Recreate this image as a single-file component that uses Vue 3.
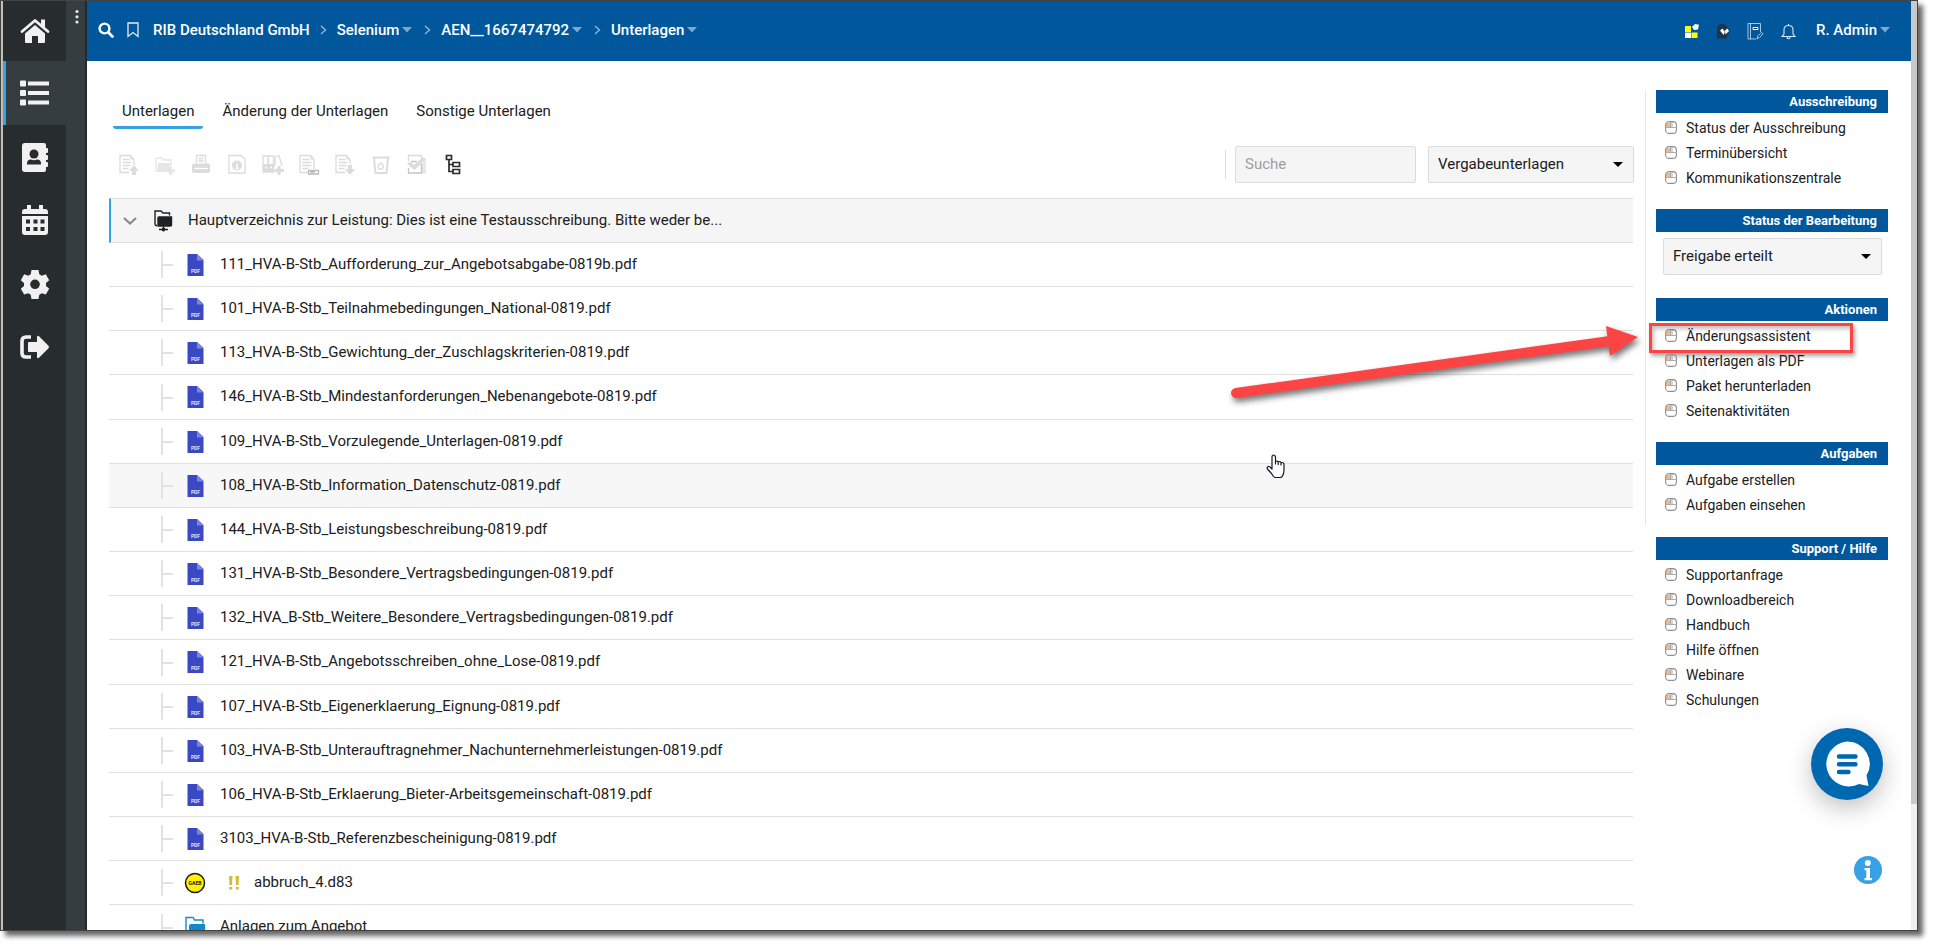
<script setup>
import { ref } from 'vue'

const search = ref('')
const filter = ref('Vergabeunterlagen')
const status = ref('Freigabe erteilt')
const activeTab = ref('Unterlagen')

const tabs = ['Unterlagen', 'Änderung der Unterlagen', 'Sonstige Unterlagen']
const crumbs = [
  { label: 'RIB Deutschland GmbH', menu: false },
  { label: 'Selenium', menu: true },
  { label: 'AEN__1667474792', menu: true },
  { label: 'Unterlagen', menu: true },
]
const files = [
  { type: 'pdf', name: '111_HVA-B-Stb_Aufforderung_zur_Angebotsabgabe-0819b.pdf' },
  { type: 'pdf', name: '101_HVA-B-Stb_Teilnahmebedingungen_National-0819.pdf' },
  { type: 'pdf', name: '113_HVA-B-Stb_Gewichtung_der_Zuschlagskriterien-0819.pdf' },
  { type: 'pdf', name: '146_HVA-B-Stb_Mindestanforderungen_Nebenangebote-0819.pdf' },
  { type: 'pdf', name: '109_HVA-B-Stb_Vorzulegende_Unterlagen-0819.pdf' },
  { type: 'pdf', name: '108_HVA-B-Stb_Information_Datenschutz-0819.pdf', hover: true },
  { type: 'pdf', name: '144_HVA-B-Stb_Leistungsbeschreibung-0819.pdf' },
  { type: 'pdf', name: '131_HVA-B-Stb_Besondere_Vertragsbedingungen-0819.pdf' },
  { type: 'pdf', name: '132_HVA_B-Stb_Weitere_Besondere_Vertragsbedingungen-0819.pdf' },
  { type: 'pdf', name: '121_HVA-B-Stb_Angebotsschreiben_ohne_Lose-0819.pdf' },
  { type: 'pdf', name: '107_HVA-B-Stb_Eigenerklaerung_Eignung-0819.pdf' },
  { type: 'pdf', name: '103_HVA-B-Stb_Unterauftragnehmer_Nachunternehmerleistungen-0819.pdf' },
  { type: 'pdf', name: '106_HVA-B-Stb_Erklaerung_Bieter-Arbeitsgemeinschaft-0819.pdf' },
  { type: 'pdf', name: '3103_HVA-B-Stb_Referenzbescheinigung-0819.pdf' },
  { type: 'gaeb', name: 'abbruch_4.d83', warning: true },
  { type: 'folder', name: 'Anlagen zum Angebot' },
]
const panels = [
  { title: 'Ausschreibung', items: ['Status der Ausschreibung', 'Terminübersicht', 'Kommunikationszentrale'] },
  { title: 'Status der Bearbeitung', select: true, items: [] },
  { title: 'Aktionen', items: ['Änderungsassistent', 'Unterlagen als PDF', 'Paket herunterladen', 'Seitenaktivitäten'] },
  { title: 'Aufgaben', items: ['Aufgabe erstellen', 'Aufgaben einsehen'] },
  { title: 'Support / Hilfe', items: ['Supportanfrage', 'Downloadbereich', 'Handbuch', 'Hilfe öffnen', 'Webinare', 'Schulungen'] },
]
const panelGroups = [panels.slice(0, 4), panels.slice(4)]
const highlighted = 'Änderungsassistent'
</script>

<template>
  <div class="window">
    <nav class="rail" aria-label="Hauptnavigation">
      <a href="#" aria-label="Startseite">
        <svg width="30" height="26" viewBox="0 0 30 26">
          <path d="M2 13.500 15 2.500 28 13.500" fill="none" stroke="#f1f1f1" stroke-width="2.800" stroke-linecap="round" stroke-linejoin="round" />
          <path d="M21 1.500h4V10l-4-3.500z M15 7l10 8.500V24q0 1-1 1h-6v-7h-6v7H6q-1 0-1-1v-8.500z" fill="#f1f1f1" />
        </svg>
      </a>
      <a href="#" class="active" aria-label="Liste">
        <svg width="30" height="26" viewBox="0 0 30 26" fill="#f1f1f1">
          <path d="M0 1.500q0-1 1-1h4q1 0 1 1v4q0 1-1 1H1q-1 0-1-1z M0 11q0-1 1-1h4q1 0 1 1v4q0 1-1 1H1q-1 0-1-1z M0 20.500q0-1 1-1h4q1 0 1 1v4q0 1-1 1H1q-1 0-1-1z M8 1.500h21v4H8z M8 11h21v4H8z M8 20.500h21v4H8z" />
        </svg>
      </a>
      <a href="#" aria-label="Kontakte">
        <svg width="28" height="30" viewBox="0 0 28 30">
          <path d="M4 1h19q2 0 2 2v3h1q1 0 1 1v3q0 1-1 1h-1v2h1q1 0 1 1v3q0 1-1 1h-1v2h1q1 0 1 1v3q0 1-1 1h-1v3q0 2-2 2H4q-3 0-3-3V4q0-3 3-3z" fill="#f1f1f1" />
          <circle cx="13" cy="12" r="4.500" fill="#272c2f" />
          <path d="M6 22.500v-1q0-4 4-4 3 1.500 6 0 4 0 4 4v1z" fill="#272c2f" />
        </svg>
      </a>
      <a href="#" aria-label="Kalender">
        <svg width="28" height="30" viewBox="0 0 28 30">
          <path d="M6 0h4v4h8V0h4v4h2q3 0 3 3v2H1V7q0-3 3-3h2z M1 11h26v16q0 3-3 3H4q-3 0-3-3z" fill="#f1f1f1" />
          <path d="M5 14.500h4v4H5z M12.500 14.500h4v4h-4z M19.500 14.500h4v4h-4z M5 22h4v4H5z M12.500 22h4v4h-4z M19.500 22h4v4h-4z" fill="#272c2f" />
        </svg>
      </a>
      <a href="#" aria-label="Einstellungen">
        <svg width="30" height="30" viewBox="0 0 30 30">
          <path d="M11.500 1h7l.8 4.200 2.500 1.500 4-1.400 3.400 5.900-3.200 2.800v2.900l3.200 2.800-3.400 5.900-4-1.400-2.500 1.500-.8 4.200h-7l-.8-4.200-2.500-1.500-4 1.400-3.400-5.900L4 16.900V14L.8 11.200l3.400-5.900 4 1.400 2.500-1.500z" fill="#f1f1f1" />
          <circle cx="15" cy="15.300" r="4.800" fill="#272c2f" />
        </svg>
      </a>
      <a href="#" aria-label="Abmelden">
        <svg width="30" height="24" viewBox="0 0 30 24">
          <path d="M11 2H6Q2 2 2 6v12q0 4 4 4h5" fill="none" stroke="#f1f1f1" stroke-width="3.600" />
          <path d="M8 8q0-1 1-1h8V2q0-2 2-.8l9.500 9.600q1 1.200 0 2.400L19 22.800q-2 1.200-2-.8v-5H9q-1 0-1-1z" fill="#f1f1f1" />
        </svg>
      </a>
    </nav>
    <div class="drawer">
      <button type="button" aria-label="Menü">
        <svg width="6" height="16" viewBox="0 0 6 16" fill="#e8e8e8"><circle cx="3" cy="2.500" r="1.600" /><circle cx="3" cy="7.800" r="1.600" /><circle cx="3" cy="13" r="1.600" /></svg>
      </button>
    </div>

    <div class="page">
      <header class="topbar">
        <button type="button" class="tool" aria-label="Suchen">
          <svg width="16" height="16" viewBox="0 0 16 16" fill="none" stroke="#fff" stroke-linecap="round"><circle cx="6.500" cy="6.500" r="4.900" stroke-width="2.400" /><path d="M10.500 10.500 14.400 14.400" stroke-width="2.800" /></svg>
        </button>
        <button type="button" class="tool bookmark" aria-label="Lesezeichen">
          <svg width="14" height="16" viewBox="0 0 14 16" fill="none" stroke="#e5edf4" stroke-width="1.300"><path d="M2 1h10v13.500L7 10.500 2 14.500z" /></svg>
        </button>
        <nav class="crumbs" aria-label="Brotkrumen">
          <template v-for="(c, i) in crumbs" :key="c.label">
            <svg v-if="i" class="sep" width="7" height="10" viewBox="0 0 7 10" fill="none" stroke="#8fb4d3" stroke-width="1.400"><path d="M1 1 5.500 5 1 9" /></svg>
            <a href="#">{{ c.label }}<svg v-if="c.menu" width="10" height="6" viewBox="0 0 10 6" fill="#7fa9cc"><path d="M0 0h10L5 5.500z" /></svg></a>
          </template>
        </nav>
        <div class="user">
          <button type="button" class="tool" aria-label="Apps">
            <svg width="14" height="16" viewBox="0 0 14 16"><path d="M0 3h6v6H0z M6.500 9.500h6v5.500h-6z" fill="#ff0" /><path d="M0 9.500h6V15H0z" fill="#fff" /><path d="m10 1 4 .8-1 4.700-4 .5-2-3z" fill="#fff" /></svg>
          </button>
          <button type="button" class="tool" aria-label="Aufgaben">
            <svg width="14" height="16" viewBox="0 0 14 16"><path d="M1 2.500h2.500V1h5v1.500H11V15.500H1z" fill="#1d3549" /><path d="m7 5.500 3-1.500 3.500 2.500-1 5-3 2-4-3z" fill="#1d3549" /><path d="M4 7.500 6.500 5.500 9 9l-1.500 3z M9 7.500 11.500 5.500 13 8 9.500 11.500z" fill="#fff" /></svg>
          </button>
          <button type="button" class="tool" aria-label="Notizen">
            <svg width="17" height="17" viewBox="0 0 17 17" fill="none" stroke="#a9c6df"><path d="M13.500 9V.500H1V16h8 M3.500.500V16" /><path d="M6 4.500h5v2H6z" stroke="#fff" fill="#172f46" /><path d="m10 16 .8-3L14.500 9.300l1.600 1.600-3.700 3.800z" /></svg>
          </button>
          <button type="button" class="tool" aria-label="Mitteilungen">
            <svg width="15" height="17" viewBox="0 0 15 17" fill="none" stroke="#dbe7f1" stroke-width="1.100"><path d="M7.500 1v1.500 M1 13.500 3 11V7q0-4.500 4.500-4.500T12 7v4l2 2.500z M6 14q0 1.800 1.500 1.800T9 14" /></svg>
          </button>
          <button type="button" class="account">R. Admin<svg width="10" height="6" viewBox="0 0 10 6" fill="#7fa9cc"><path d="M0 0h10L5 5.500z" /></svg></button>
        </div>
      </header>

      <div class="body">
        <main>
          <div class="tabs" role="tablist">
            <button v-for="t in tabs" :key="t" type="button" role="tab" :aria-selected="t === activeTab" :class="{ active: t === activeTab }" @click="activeTab = t">{{ t }}</button>
          </div>

          <div class="toolbar">
            <button type="button" disabled aria-label="Hochladen">
              <svg width="22" height="22" viewBox="0 0 22 22"><path d="M11 18.500H2V1.500h10.500l3.500 4V11 M4.500 5.500h7 M4.500 8.500h9 M4.500 11.500h8 M4.500 14.500h6" /><path d="m12.500 5.500v-4l4 4z M16 11l5 6h-3v4h-4v-4h-3z" class="fill" /></svg>
            </button>
            <button type="button" disabled class="faint" aria-label="Ordner anlegen">
              <svg width="22" height="22" viewBox="0 0 22 22"><path d="M2 18V4h6l1.500 2H17v3" /><path d="M4 9h13.500v2.500H15V16h-3v2H3z" class="fill" /><path d="M16.500 12.500V21 M12 17h9" class="plus" /></svg>
            </button>
            <button type="button" disabled aria-label="Drucken">
              <svg width="22" height="22" viewBox="0 0 22 22"><path d="M6.500 9V1.500h9V9 M8.500 4.500h5 M8.500 7h5" /><path d="M2 11.500q0-2 2-2h14q2 0 2 2V17q0 2-2 2H4q-2 0-2-2z" class="fill" /><path d="M4.500 14.500h13" stroke="#fff" /></svg>
            </button>
            <button type="button" disabled aria-label="Information">
              <svg width="22" height="22" viewBox="0 0 22 22"><path d="M3 1.500h12l4 4V19H3z" /><circle cx="11" cy="11.500" r="5" class="fill" /><path d="M11 10v5 M9.500 14.500h3 M10.500 8.500h1" stroke="#fff" stroke-width="1.600" /></svg>
            </button>
            <button type="button" disabled aria-label="Ordner hinzufügen">
              <svg width="22" height="22" viewBox="0 0 22 22"><path d="M1 2h5v16H1z M6.500 2h5v16h-5z M13 3l4-1.500L20 12 M13 3v9" /><path d="M1 10h5v8H1z M6.500 10h5v8h-5z" class="fill" /><path d="M3 13.500h1.500 M8.500 13.500H10" stroke="#fff" stroke-width="2" /><path d="M17 12v9 M12.500 16.500H22" class="plus" /></svg>
            </button>
            <button type="button" disabled aria-label="Umbenennen">
              <svg width="22" height="22" viewBox="0 0 22 22"><path d="M10 18.500H2V1.500h10.500l3.500 4V15 M4.500 5.500h7 M4.500 8.500h9 M4.500 11.500h9 M4.500 14.500h6" /><path d="m12.500 5.500v-4l4 4z" class="fill" /><path d="M10.500 16.500h10v3.500h-10z M12 18h5" stroke="#bbb" /></svg>
            </button>
            <button type="button" disabled aria-label="Herunterladen">
              <svg width="22" height="22" viewBox="0 0 22 22"><path d="M11 18.500H2V1.500h10.500l3.500 4V10 M4.500 5.500h7 M4.500 8.500h9 M4.500 11.500h8 M4.500 14.500h6" /><path d="m12.500 5.500v-4l4 4z M14 11h4v4h3l-5 6-5-6h3z" class="fill" /></svg>
            </button>
            <button type="button" disabled aria-label="Löschen">
              <svg width="22" height="22" viewBox="0 0 22 22"><path d="M2.500 3.500h17 M4 4l1.500 15h11L18 4" class="thick" /><path d="m8 13 1.500-3.500h2.500L13.500 13l-1.500 2H9z" /></svg>
            </button>
            <button type="button" disabled aria-label="Prüfen">
              <svg width="22" height="22" viewBox="0 0 22 22"><path d="M2.500 7V1.500h13V4 M17 9v9.500h2V7" /><path d="M2.500 14v5h13v-9 M5 7.500h6" class="mid" /><path d="m1 10 3-2.500 4 3.500L17 3l3 2.500L8.500 16z" class="fill" /></svg>
            </button>
            <button type="button" class="dark" aria-label="Baumansicht">
              <svg width="22" height="22" viewBox="0 0 22 22"><path d="M4.500 1.500h5v4h-5z M11 8.500h6.500v4H11z M11 15.500h6.500v4H11z M7 6v11.500h4 M7 10.500h4" /></svg>
            </button>
            <div class="filters">
              <input v-model="search" type="text" placeholder="Suche" aria-label="Suche" />
              <label class="select">
                <select v-model="filter" aria-label="Dokumentfilter"><option>Vergabeunterlagen</option></select>
                <svg width="10" height="5" viewBox="0 0 10 5"><path d="M0 0h10L5 5z" /></svg>
              </label>
            </div>
          </div>

          <ul class="tree">
            <li class="root">
              <button type="button" class="toggle" aria-label="Einklappen">
                <svg width="14" height="8" viewBox="0 0 14 8" fill="none" stroke="#8a8a8a" stroke-width="2.200"><path d="M1 1l6 5.500L13 1" /></svg>
              </button>
              <svg class="rootIcon" width="19" height="22" viewBox="0 0 19 22" fill="none" stroke="#1f2122" stroke-width="1.400"><path d="M3 15.500H2Q1 15 1 14V1h6l2 2h6.500v2.500" /><path d="M4 8q0-1 1-1h12.500v8q0 1-1 1H4z" fill="#1f2122" /><path d="M9.500 16v5 M5 19.500h9" /><circle cx="9.500" cy="19.500" r="1.200" fill="#1f2122" /></svg>
              <a href="#">Hauptverzeichnis zur Leistung: Dies ist eine Testausschreibung. Bitte weder be...</a>
            </li>
            <li v-for="f in files" :key="f.name" :class="{ hover: f.hover }">
              <span class="branch"></span>
              <span class="icon">
                <svg v-if="f.type === 'pdf'" width="17" height="24" viewBox="0 0 17 24"><path d="M.500 1h9.500l6.500 6v16H.500z" fill="#3a48c4" /><path d="M10 1l6.500 6.500H10z" fill="#7d86dc" /><text x="8.500" y="20" text-anchor="middle" class="mini" fill="#dfe2f8">PDF</text></svg>
                <svg v-else-if="f.type === 'gaeb'" width="22" height="22" viewBox="0 0 22 22"><circle cx="11" cy="11" r="9.500" fill="#fff100" stroke="#1c1c1c" stroke-width="1.500" /><text x="11" y="13" text-anchor="middle" class="mini" fill="#111">GAEB</text></svg>
                <svg v-else width="20" height="22" viewBox="0 0 20 22"><path d="M3 18H1V1.500h7L9.500 4H18v3.500" fill="none" stroke="#1488cc" stroke-width="1.400" /><path d="M4 10q0-2 2-2h14v10q0 2-2 2H4z" fill="#1488cc" /></svg>
              </span>
              <svg v-if="f.warning" class="warning" width="12" height="14" viewBox="0 0 12 14" fill="#d2bd35"><path d="M1 0h3.500L4 9H1.500z M7.500 0H11l-.5 9H8z M1.200 11h3v2.500h-3z M7.800 11h3v2.500h-3z" /></svg>
              <a href="#">{{ f.name }}</a>
            </li>
          </ul>
        </main>

        <aside>
          <div v-for="(group, g) in panelGroups" :key="g" class="group">
            <section v-for="p in group" :key="p.title">
              <h2>{{ p.title }}</h2>
              <label v-if="p.select" class="select">
                <select v-model="status" :aria-label="p.title"><option>Freigabe erteilt</option></select>
                <svg width="10" height="5" viewBox="0 0 10 5"><path d="M0 0h10L5 5z" /></svg>
              </label>
              <ul v-else>
                <li v-for="item in p.items" :key="item">
                  <svg width="12" height="13" viewBox="0 0 12 13"><path d="M1 2h5v4H1z" fill="#f6b98a" /><rect x=".600" y=".600" width="10.800" height="11.800" rx="3.500" fill="none" stroke="#8f8f8f" stroke-width="1.100" /><path d="M.500 6.500h11 M5.500 1v5.500 M7 1v5.500" stroke="#a5a5a5" stroke-width=".900" /></svg>
                  <a href="#">{{ item }}</a>
                  <template v-if="item === highlighted">
                    <span class="marker"></span>
                    <svg class="arrow" width="416" height="80" viewBox="0 0 416 80"><path d="M6 68 380 16" stroke="#fd4444" stroke-width="10" stroke-linecap="round" /><path d="M376 1 408 12 380 31z" fill="#fd4444" /></svg>
                  </template>
                </li>
              </ul>
            </section>
          </div>
        </aside>
      </div>

      <svg class="cursor" width="20" height="25" viewBox="0 0 20 25"><path d="M6 15V3q0-2 1.500-2T9.500 3v7V8q0-1 1.200-1t1.500 1v2.500V8.500q.3-1 1.300-1t1.500 1V11 9.500q.5-1 1.500-1t1.500 1.500v6q0 5-3 7.500H9q-2-1-3.500-4L1.500 15q-1-1.500.3-2.300T5 14z" fill="#fff" stroke="#15152b" stroke-width="1.200" stroke-linejoin="round" /></svg>

      <button type="button" class="chat" aria-label="Chat">
        <svg width="46" height="46" viewBox="0 0 46 46"><path d="M23 .500a22.500 22.500 0 0 1 19.500 34L44.500 45 35 43A22.500 22.500 0 1 1 23 .500z" fill="#fff" /><path d="M15 15.500h16.500 M15 23.300h16.500 M15 31h9.500" stroke="#0067b1" stroke-width="4.400" stroke-linecap="round" /></svg>
      </button>
      <button type="button" class="info" aria-label="Information">
        <svg width="28" height="28" viewBox="0 0 28 28"><circle cx="14" cy="14" r="14" fill="#36a2e5" /><circle cx="13.800" cy="7" r="3" fill="#fff" /><path d="M10.500 12H16v10h2v2.300h-7.500V22h1.800v-7.700h-1.800z" fill="#fff" /></svg>
      </button>
    </div>
    <div class="scrollbar"><span></span></div>
  </div>
</template>

<style>
html,
body {
  background: #fff;
}
body {
  overflow: hidden;
}
</style>

<style scoped>
* {
  box-sizing: border-box;
}
.window {
  display: flex;
  height: calc(100vh - 15px);
  margin: 0 15px 15px 0;
  border: 1px solid #434343;
  box-shadow: 5px 5px 5px rgba(0, 0, 0, 0.6);
  background: #fff;
  overflow: hidden;
  font-family: Roboto, 'Liberation Sans', sans-serif;
  font-size: 15px;
  line-height: 20px;
  color: #202020;
}
button,
input,
select {
  font: inherit;
  color: inherit;
  border: 0;
  padding: 0;
  margin: 0;
  background: none;
}
a {
  color: inherit;
  text-decoration: none;
}
svg {
  display: block;
  flex: none;
}
ul {
  list-style: none;
  margin: 0;
  padding: 0;
}
.rail {
  flex: none;
  width: 65px;
  border-left: 2px solid #c4beba;
  background: #272c2f;
  display: grid;
  grid-template-rows: 60px;
  grid-auto-rows: 64px 63px;
}
.rail a {
  display: flex;
  align-items: center;
  justify-content: center;
}
.rail .active {
  background: #363d40;
  box-shadow: inset 3px 0 #36a2e5;
}
.drawer {
  flex: none;
  width: 21px;
  background: #363d40;
  border-right: 2px solid #24292c;
}
.drawer button {
  width: 100%;
  padding: 8px 0 0 8px;
}
.page {
  position: relative;
  flex: 1;
  min-width: 0;
  display: flex;
  flex-direction: column;
}
.topbar {
  flex: none;
  height: 60px;
  padding: 0 21px 2px 11px;
  display: flex;
  align-items: center;
  background: #00579c;
  color: #fff;
  font-weight: 500;
}
.bookmark {
  margin: 0 13px 0 12px;
}
.crumbs,
.crumbs a,
.user,
.account {
  display: flex;
  align-items: center;
}
.crumbs {
  gap: 10px;
}
.crumbs a,
.account {
  gap: 3px;
}
.crumbs .sep:not(:nth-child(2)) {
  margin-left: 2px;
}
.user {
  margin-left: auto;
  gap: 17px;
}
.user .tool {
  padding-top: 2px;
}
.account {
  margin-left: 3px;
}
.body {
  flex: 1;
  min-height: 0;
  display: flex;
  overflow: hidden;
}
main {
  flex: 1;
  min-width: 0;
  padding: 29px 12px 0 22px;
}
.tabs {
  display: flex;
  gap: 10px;
  padding-left: 4px;
}
.tabs button {
  height: 39px;
  padding: 5px 9px 0;
  border-bottom: 3px solid transparent;
}
.tabs .active {
  border-bottom-color: #36a2e5;
  border-radius: 3px;
}
.toolbar {
  display: flex;
  align-items: center;
  margin: 17px -1px 15px 2px;
}
.toolbar button {
  width: 36px;
  height: 36px;
  display: flex;
  align-items: center;
  justify-content: center;
}
.toolbar button svg {
  fill: none;
  stroke: #dcdcdc;
  stroke-width: 1.3;
}
.toolbar button .fill {
  fill: #dcdcdc;
  stroke: none;
}
.toolbar button .plus {
  stroke-width: 3;
}
.toolbar button .mid {
  stroke: #c4c4c4;
}
.toolbar button .thick {
  stroke-width: 2;
}
.toolbar .faint {
  opacity: 0.7;
}
.toolbar .dark svg {
  stroke: #2b2b2b;
  stroke-width: 1.7;
}
.filters {
  margin-left: auto;
  display: flex;
  align-items: center;
  gap: 12px;
}
.filters::before {
  content: '';
  width: 1px;
  height: 29px;
  margin-right: -3px;
  background: #dcdcdc;
}
.filters input {
  width: 181px;
  height: 37px;
  padding: 0 9px 2px;
  border: 1px solid #dcdcdc;
  border-radius: 2px;
  background: #f5f5f5;
}
.filters input::placeholder {
  color: #9e9e9e;
  opacity: 1;
}
.select {
  position: relative;
  display: block;
}
.select select {
  appearance: none;
  width: 100%;
  height: 37px;
  padding: 0 28px 2px 9px;
  border: 1px solid #dcdcdc;
  border-radius: 2px;
  background: #f5f5f5;
}
.select svg {
  position: absolute;
  right: 11px;
  top: 16px;
}
.filters .select {
  width: 206px;
}
.tree li {
  display: flex;
  align-items: center;
  height: 44px;
  border-bottom: 1px solid #e0e0e0;
  padding-left: 52px;
}
.tree li:nth-child(6n + 5) {
  height: 45px;
}
.tree li a {
  padding-bottom: 2px;
}
.tree .root {
  height: 45px;
  padding-left: 12px;
  border-top: 1px solid #e0e0e0;
  border-left: 2px solid #36a2e5;
  background: #f5f5f5;
}
.tree .hover {
  background: #f7f7f7;
}
.rootIcon {
  margin: 0 15px 0 17px;
}
.branch {
  width: 12px;
  height: 27px;
  border-left: 2px solid #e2e2e2;
  background: linear-gradient(#e2e2e2, #e2e2e2) 0 13px / 100% 2px no-repeat;
}
.icon {
  width: 22px;
  margin: 0 14px 0 11px;
  display: flex;
  justify-content: center;
}
.warning {
  margin: 0 14px 0 8px;
}
.mini {
  font-size: 5px;
  font-weight: 700;
}
aside {
  flex: none;
  width: 266px;
  padding: 29px 23px 0 0;
  font-size: 14px;
}
.group {
  padding-left: 10px;
}
.group:first-child {
  padding-bottom: 9px;
  margin-bottom: 11px;
  border-left: 1px solid #e8e8e8;
}
.group:last-child {
  margin-left: 1px;
}
section:not(:last-child) {
  margin-bottom: 19px;
}
h2 {
  margin: 0 0 2px;
  height: 23px;
  padding-right: 11px;
  background: #00579c;
  color: #fff;
  font-size: 13px;
  line-height: 23px;
  font-weight: 700;
  text-align: right;
}
aside li {
  position: relative;
  display: flex;
  align-items: center;
  gap: 9px;
  height: 25px;
  padding-left: 9px;
}
aside .select {
  margin: 6px 6px 23px 7px;
  font-size: 15px;
}
.marker {
  position: absolute;
  left: -7px;
  right: 35px;
  top: 0;
  height: 30px;
  border: 3px solid #fd4444;
  box-shadow: 2px 3px 4px rgba(0, 0, 0, 0.35), inset 2px 3px 4px rgba(0, 0, 0, 0.25);
}
.arrow {
  position: absolute;
  right: 242px;
  top: 2px;
  fill: none;
  filter: drop-shadow(2px 4px 3px rgba(0, 0, 0, 0.55));
}
.cursor {
  position: absolute;
  right: 625px;
  top: 453px;
}
.chat {
  position: absolute;
  right: 28px;
  bottom: 130px;
  width: 72px;
  height: 72px;
  display: flex;
  align-items: center;
  justify-content: center;
  border-radius: 50%;
  background: #0067b1;
  box-shadow: 0 8px 24px rgba(0, 0, 0, 0.25);
}
.info {
  position: absolute;
  right: 29px;
  bottom: 46px;
}
.scrollbar {
  flex: none;
  width: 6px;
  background: #f0f0f0;
}
.scrollbar span {
  display: block;
  height: calc(100% - 126px);
  background: #c9c9c9;
}
</style>
